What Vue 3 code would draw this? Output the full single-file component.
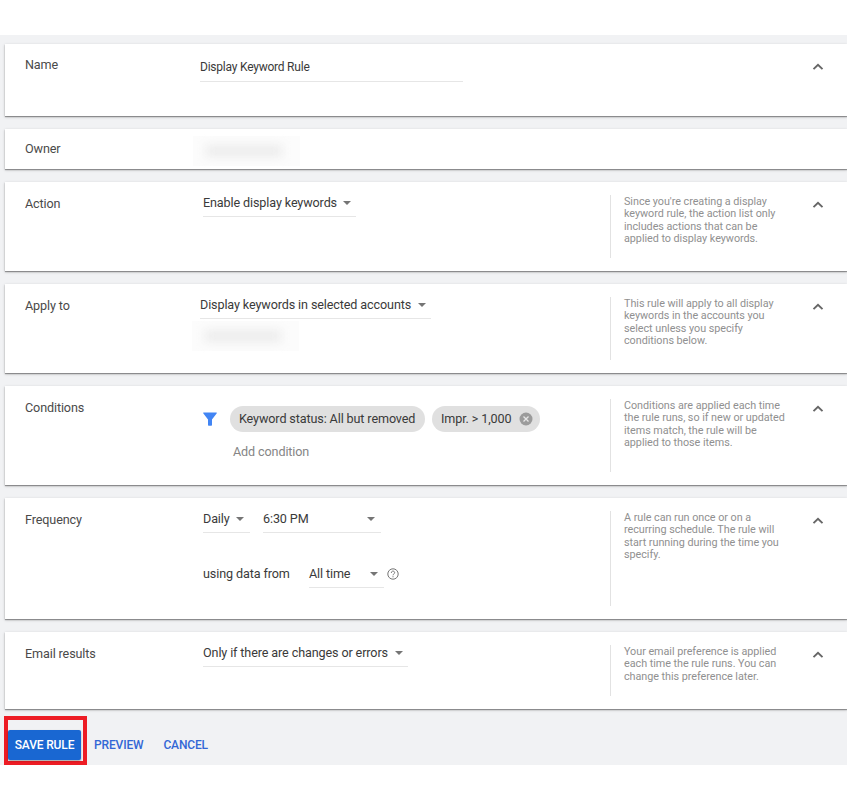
<script setup>
import { h } from 'vue'

const Caret = () => h('svg', { class: 'caret', viewBox: '0 0 8 4', width: 8, height: 4, style: 'flex: none' }, [
  h('path', { d: 'M0 0h8L4 4z', fill: '#757575' }),
])

const cards = [
  { id: 'name', label: 'Name', open: true },
  { id: 'owner', label: 'Owner', open: false },
  { id: 'action', label: 'Action', open: true, help: ["Since you're creating a display", 'keyword rule, the action list only', 'includes actions that can be', 'applied to display keywords.'] },
  { id: 'apply', label: 'Apply to', open: true, help: ['This rule will apply to all display', 'keywords in the accounts you', 'select unless you specify', 'conditions below.'] },
  { id: 'conditions', label: 'Conditions', open: true, help: ['Conditions are applied each time', 'the rule runs, so if new or updated', 'items match, the rule will be', 'applied to those items.'] },
  { id: 'frequency', label: 'Frequency', open: true, help: ['A rule can run once or on a', 'recurring schedule. The rule will', 'start running during the time you', 'specify.'] },
  { id: 'email', label: 'Email results', open: true, help: ['Your email preference is applied', 'each time the rule runs. You can', 'change this preference later.'] },
]
</script>

<template>
  <main class="page">
    <section v-for="card in cards" :key="card.id" class="card" :class="card.id">
      <div class="label">{{ card.label }}</div>

      <div class="content">
        <div v-if="card.id === 'name'" class="name-input">Display Keyword Rule</div>

        <div v-else-if="card.id === 'owner'" class="redacted"><i></i></div>

        <div v-else-if="card.id === 'action'" class="select action-select">
          <span>Enable display keywords</span><Caret />
        </div>

        <template v-else-if="card.id === 'apply'">
          <div class="select apply-select"><span>Display keywords in selected accounts</span><Caret /></div>
          <div class="redacted"><i></i></div>
        </template>

        <div v-else-if="card.id === 'conditions'" class="filter">
          <svg class="funnel" width="14" height="14" viewBox="0 0 14 14">
            <path d="M.8.5h12.4c.6 0 .8.6.4 1.1L9 7.500V13c0 .4-.3.7-.7.7H5.700c-.4 0-.7-.3-.7-.7V7.500L.4 1.600C0 1.100.2.500.8.500z" fill="#4285f4" />
          </svg>
          <div>
            <div class="chips">
              <span class="chip status-chip"><span>Keyword status: All but removed</span></span>
              <span class="chip impr-chip"><span>Impr. &gt; 1,000</span>
                <svg width="14" height="14" viewBox="0 0 14 14">
                  <circle cx="7" cy="7" r="6.500" fill="#9b9b9b" />
                  <path d="M4.500 4.500l5 5m0-5l-5 5" stroke="#e6e6e6" stroke-width="1.300" />
                </svg>
              </span>
            </div>
            <div class="add">Add condition</div>
          </div>
        </div>

        <template v-else-if="card.id === 'frequency'">
          <div class="row">
            <div class="select daily"><span>Daily</span><Caret /></div>
            <div class="select time"><span>6:30 PM</span><Caret /></div>
          </div>
          <div class="row data-row">
            <span class="using">using data from</span>
            <div class="select range"><span>All time</span><Caret /></div>
            <svg class="question" width="12" height="12" viewBox="0 0 12 12" fill="none" stroke="#757575">
              <circle cx="6" cy="6" r="5.200" />
              <path d="M4.300 4.900C4.300 2.500 7.700 2.600 7.700 4.700C7.700 5.900 6 5.900 6 7.300M6 8.200v1.100" />
            </svg>
          </div>
        </template>

        <div v-else class="select email-select"><span>Only if there are changes or errors</span><Caret /></div>
      </div>

      <div class="help" :class="{ ruled: card.help }">
        <div v-for="line in card.help" :key="line">{{ line }}</div>
      </div>

      <svg v-if="card.open" class="chevron" width="12" height="8" viewBox="0 0 12 8">
        <path d="M1.500 6.100L6 1.800l4.500 4.300" fill="none" stroke="#666" stroke-width="1.900" />
      </svg>
    </section>

    <footer class="actions">
      <div class="highlight"><button class="save">SAVE RULE</button></div>
      <button class="link preview">PREVIEW</button>
      <button class="link">CANCEL</button>
    </footer>
  </main>
</template>

<style>
body { background: #fff; }
</style>

<style scoped>
.page {
  box-sizing: border-box;
  width: 847px;
  height: 730px;
  margin-top: 35px;
  padding: 9px 0 0 5px;
  background: #f1f2f4;
  font: 12.6px/16px Roboto, sans-serif;
  letter-spacing: -.12px;
  color: #3a3a3a;
  overflow: hidden;
}
.card {
  box-sizing: border-box;
  display: grid;
  grid-template-columns: 178px 407px 195px 1fr;
  height: 89px;
  margin-bottom: 13px;
  padding: 13px 0 13px 20px;
  background: #fff;
  box-shadow: 0 1px 1px rgba(0, 0, 0, .34), 0 1px 3px rgba(0, 0, 0, .2);
  white-space: nowrap;
}
.name { height: 72px; }
.owner { height: 40px; padding-bottom: 0; }
.conditions { height: 99px; }
.frequency { height: 121px; }
.email { height: 77px; }
.label { padding-top: 1px; color: #4a4a4a; }
.name .label, .owner .label { padding-top: 0; }
.owner .label { margin-top: -1px; }
.name .content, .apply .content { margin-left: -3px; }
.name-input {
  box-sizing: border-box;
  width: 263px;
  height: 25px;
  padding-top: 2px;
  border-bottom: 1px solid #e6e6e6;
  font-size: 12px;
  letter-spacing: -.22px;
}
.select {
  box-sizing: border-box;
  display: flex;
  align-items: center;
  justify-content: space-between;
  height: 22px;
  padding: 0 5px 5px 0;
  border-bottom: 1px solid #e6e6e6;
}
.action-select { width: 153px; }
.apply-select { width: 231px; }
.email-select { width: 205px; }
.redacted {
  display: flex;
  align-items: center;
  width: 107px;
  height: 30px;
  box-sizing: border-box;
  padding-left: 13px;
  background: #fcfcfc;
}
.redacted i {
  width: 76px;
  height: 12px;
  background: #ececec;
  filter: blur(5px);
}
.owner .redacted { margin: -6px 0 0 -10px; }
.apply .redacted { margin: 2px 0 0 -8px; }
.filter { display: flex; gap: 13px; padding-top: 7px; }
.funnel { margin-top: 6px; flex: none; }
.chips { display: flex; gap: 7px; }
.chip {
  box-sizing: border-box;
  display: flex;
  align-items: center;
  justify-content: space-between;
  height: 26px;
  padding: 0 9px;
  border-radius: 13px;
  background: #e0e0e0;
}
.status-chip { width: 195px; }
.impr-chip { width: 108px; padding-right: 7px; }
.add { margin: 12px 0 0 3px; color: #858585; }
.row { display: flex; gap: 13px; }
.daily { width: 47px; padding-right: 6px; }
.time { width: 118px; padding-right: 6px; }
.data-row { gap: 0; margin-top: 33px; }
.using { width: 106px; }
.range { width: 75px; padding-right: 6px; }
.question { margin: 2px 0 0 3px; }
.help {
  padding: 1px 0 0 13px;
  font-size: 10.8px;
  line-height: 12.300px;
  letter-spacing: -.04px;
  color: #909090;
}
.ruled { border-left: 1px solid #e2e2e2; }
.chevron { margin: 6px 0 0 7px; }
.actions { display: flex; margin: -6px 0 0 -1px; }
.highlight {
  box-sizing: border-box;
  width: 83px;
  height: 49px;
  padding-top: 10px;
  border: 4px solid #ed1c24;
}
button {
  border: 0;
  padding: 0;
  background: none;
  font: 500 12px/16px Roboto, sans-serif;
  letter-spacing: -.15px;
}
.save {
  width: 73px;
  height: 30px;
  border-radius: 2px;
  background: #1967d2;
  color: #fff;
  box-shadow: 0 1px 2px rgba(0, 0, 0, .35);
}
.link { height: 16px; margin: 21px 0 0 7px; color: #3367d6; }
.preview { margin-right: 13px; }
</style>
